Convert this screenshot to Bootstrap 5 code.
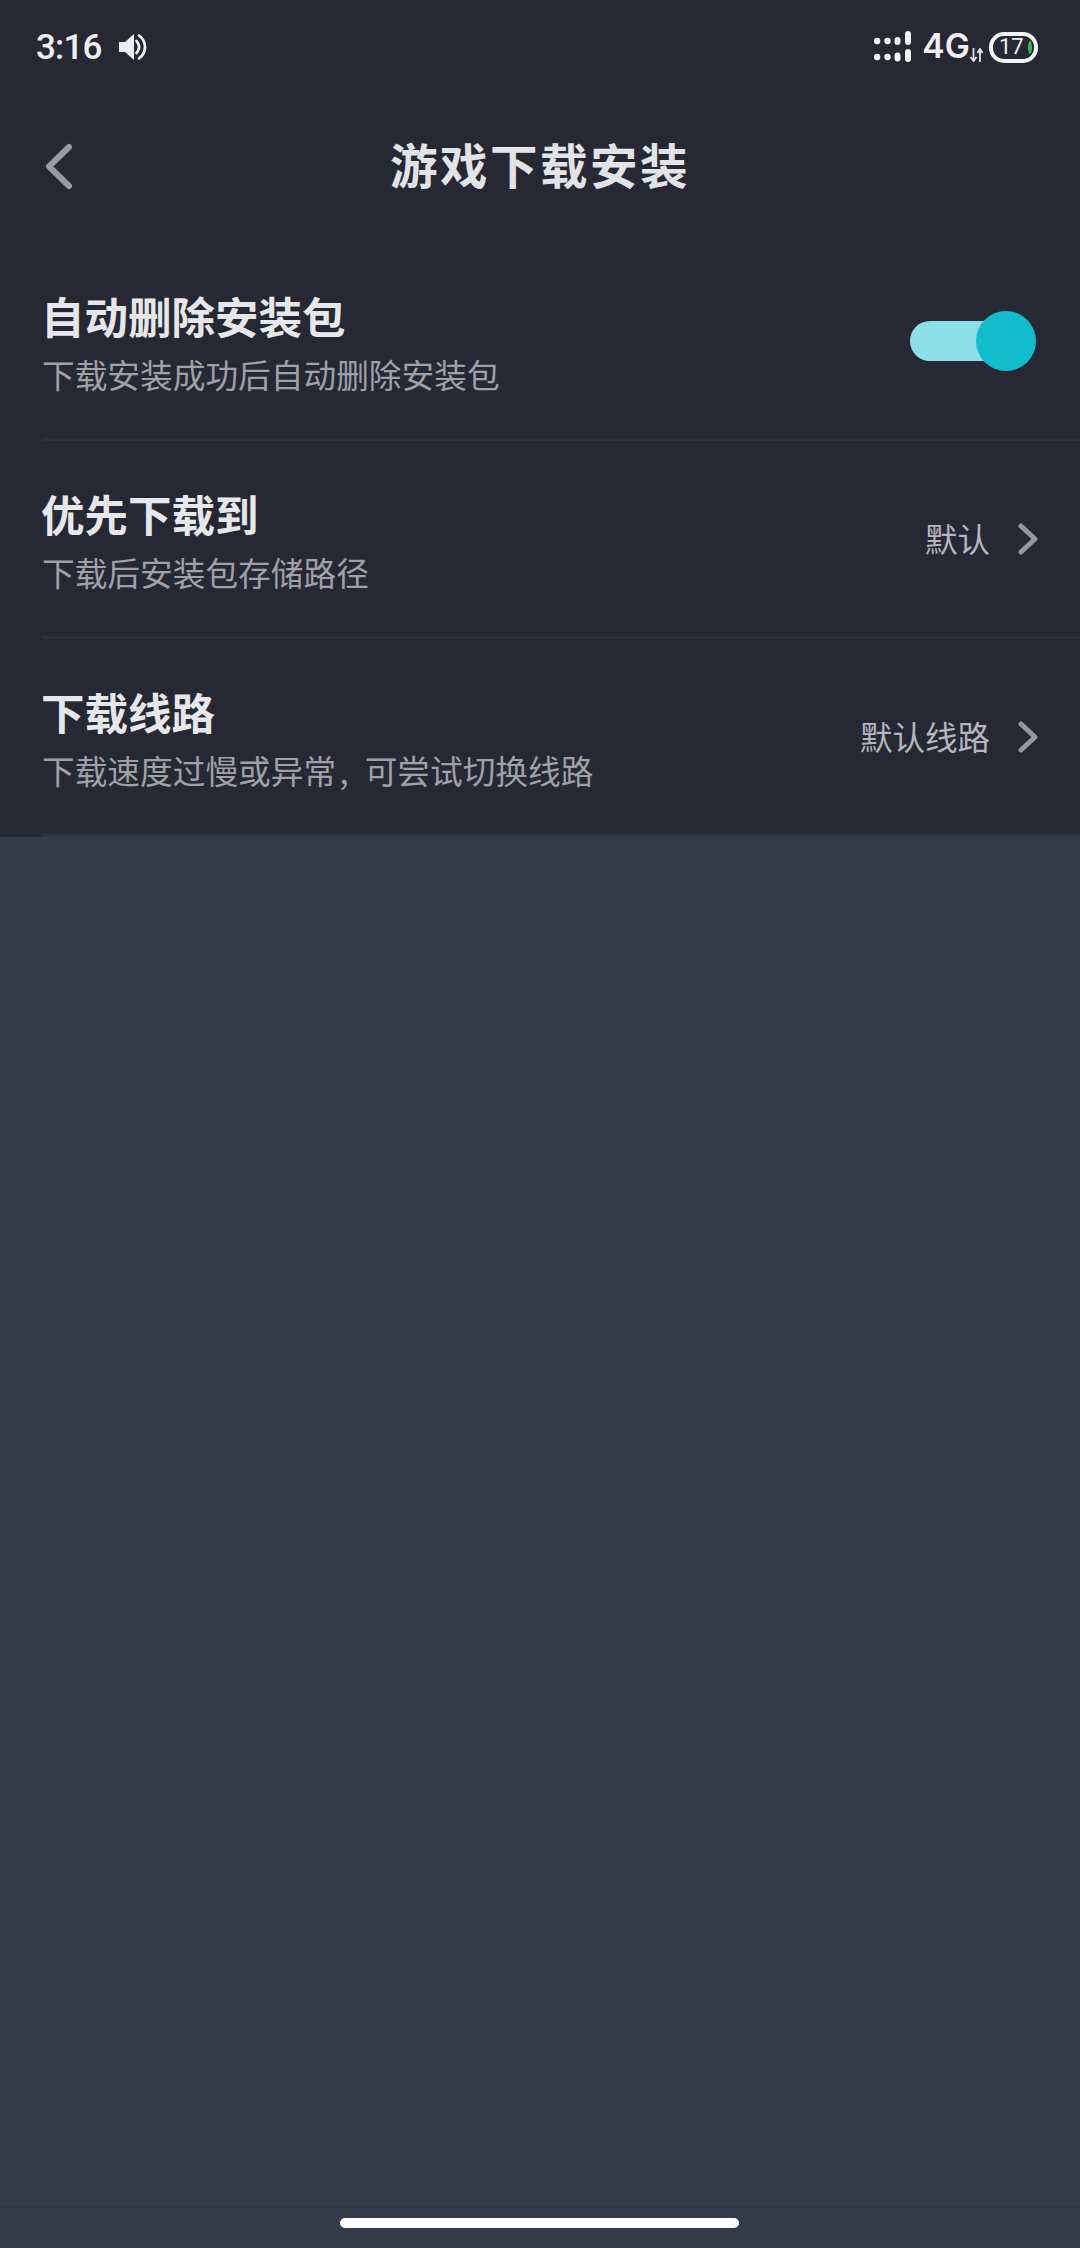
<!DOCTYPE html>
<html lang="zh">
<head>
<meta charset="utf-8">
<title>游戏下载安装</title>
<link rel="stylesheet" href="https://cdn.jsdelivr.net/npm/bootstrap@5.3.0/dist/css/bootstrap.min.css">
<style>
html,body{height:100%;margin:0}
body{background:#343a47;font-family:"Noto Sans CJK SC","Noto Sans",sans-serif;width:1080px;height:2248px;overflow:hidden}
.screen{height:2248px}
.top-panel{background:#262833}
.status{height:94px;padding:0 42px 0 36px;color:#eeeff2}
.clock{font-family:Roboto,"Noto Sans",sans-serif;font-size:35px;font-weight:500;line-height:1;width:83px;letter-spacing:-.8px}
.net{font-family:Inter,"Noto Sans",sans-serif;font-size:33.500px;font-weight:600;line-height:1;margin-left:11px;letter-spacing:.2px}
.batt{width:49px;height:31px;border:4px solid #f2f3f5;border-radius:15px;font-family:Roboto,sans-serif;font-size:22px;line-height:1;margin-left:6px;padding-left:6px;position:relative}
.batt-fill{position:absolute;right:2px;top:5px;width:4px;height:13px;border-radius:50%;background:#3fb34f}
.nav-head{height:149px;position:relative;padding-bottom:10px}
.back-btn{position:absolute;left:45px;top:49px;line-height:0}
.page-title{font-size:47.500px;font-weight:700;color:#e2e3e7;letter-spacing:2.500px;line-height:1;margin:0}
.set-row{height:198px;margin-left:42px;padding-right:42px;border-bottom:3px solid #2f313c}
.set-row:last-child{border-bottom-color:#2f333f}
.row-title{font-size:43.500px;font-weight:700;color:#e6e7ea;line-height:59px;margin:0 0 0 -1px;padding-top:1px}
.row-sub{font-size:32.700px;color:#a0a1a7;line-height:57px;margin:0}
.row-text{padding-top:42px}
.cm{display:inline-block;width:.87em;padding-left:.1em}
.val{font-size:32.500px;color:#b5b6bb;line-height:1;margin-right:28px}
.tog{width:126px;height:60px;position:relative;margin-right:2px;margin-top:1px}
.tog-track{position:absolute;left:0;right:30px;top:10px;height:40px;border-radius:20px;background:#8ee0e8}
.tog-knob{position:absolute;right:0;top:0;width:60px;height:60px;border-radius:50%;background:#13bccc}
.tail{height:42px;border-top:2px solid #313643}
.home-bar{width:399px;height:10px;border-radius:5px;background:#fff;margin:10px 0 0 340px}
</style>
</head>
<body>
<div class="screen d-flex flex-column">
  <div class="top-panel">
    <div class="status d-flex align-items-center">
      <span class="clock">3:16</span>
      <svg width="28" height="28" viewBox="0 0 28 28"><path d="M0 9h6l9-8v26l-9-8H0z" fill="#eeeff2"/><path d="M17.500 8c3.500 4 3.500 8 0 12M20 2.500c8 6 8 17 0 23" fill="none" stroke="#eeeff2" stroke-width="2.800" stroke-linecap="round"/></svg>
      <div class="ms-auto d-flex align-items-center">
        <svg width="37" height="32" viewBox="0 0 37 32" fill="#f2f3f5"><circle cx="3.200" cy="10" r="3.200"/><circle cx="13.500" cy="10" r="3.200"/><rect x="20.500" y="6" width="6" height="8" rx="3"/><rect x="31" y="0" width="6" height="14" rx="3"/><circle cx="3.200" cy="26" r="3.200"/><circle cx="13.500" cy="26" r="3.200"/><rect x="20.500" y="21.500" width="6" height="9" rx="3"/><rect x="31" y="18" width="6" height="13" rx="3"/></svg>
        <span class="net">4G</span>
        <svg width="13" height="14" viewBox="0 0 13 14" class="mt-3"><path d="M3.500 0v12M0.500 9l3 4 3-4" fill="none" stroke="#dfe0e4" stroke-width="1.800"/><path d="M10 14V2M7.500 5l2.500-4 2.500 4" fill="none" stroke="#dfe0e4" stroke-width="1.800"/></svg>
        <div class="batt d-flex align-items-center"><span>17</span><i class="batt-fill"></i></div>
      </div>
    </div>
    <div class="nav-head d-flex align-items-center justify-content-center">
      <svg class="back-btn" width="28" height="47" viewBox="0 0 28 47"><path d="M24 4 4 23.500 24 43" fill="none" stroke="#9a9ba0" stroke-width="6" stroke-linecap="round" stroke-linejoin="round"/></svg>
      <h1 class="page-title">游戏下载安装</h1>
    </div>
    <div class="set-row d-flex justify-content-between align-items-center">
      <div class="row-text align-self-start"><p class="row-title">自动删除安装包</p><p class="row-sub">下载安装成功后自动删除安装包</p></div>
      <div class="tog"><div class="tog-track"></div><div class="tog-knob"></div></div>
    </div>
    <div class="set-row d-flex justify-content-between align-items-center">
      <div class="row-text align-self-start"><p class="row-title">优先下载到</p><p class="row-sub">下载后安装包存储路径</p></div>
      <div class="d-flex align-items-center"><span class="val">默认</span><svg width="20" height="32" viewBox="0 0 20 32"><path d="M3 3 17 16 3 29" fill="none" stroke="#97989d" stroke-width="5" stroke-linecap="round" stroke-linejoin="round"/></svg></div>
    </div>
    <div class="set-row d-flex justify-content-between align-items-center">
      <div class="row-text align-self-start"><p class="row-title">下载线路</p><p class="row-sub">下载速度过慢或异常<span class="cm">,</span>可尝试切换线路</p></div>
      <div class="d-flex align-items-center"><span class="val">默认线路</span><svg width="20" height="32" viewBox="0 0 20 32"><path d="M3 3 17 16 3 29" fill="none" stroke="#97989d" stroke-width="5" stroke-linecap="round" stroke-linejoin="round"/></svg></div>
    </div>
  </div>
  <div class="flex-grow-1"></div>
  <div class="tail"><div class="home-bar"></div></div>
</div>
</body>
</html>
